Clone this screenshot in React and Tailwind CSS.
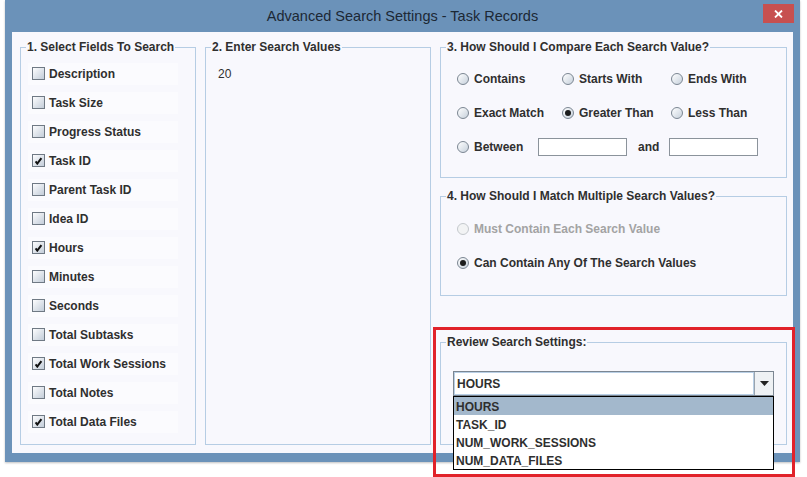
import React from 'react';

/* -------------------------------------------------------------------------- */
/*                                   Data                                     */
/* -------------------------------------------------------------------------- */

const FIELDS = [
  { label: 'Description', checked: false },
  { label: 'Task Size', checked: false },
  { label: 'Progress Status', checked: false },
  { label: 'Task ID', checked: true },
  { label: 'Parent Task ID', checked: false },
  { label: 'Idea ID', checked: false },
  { label: 'Hours', checked: true },
  { label: 'Minutes', checked: false },
  { label: 'Seconds', checked: false },
  { label: 'Total Subtasks', checked: false },
  { label: 'Total Work Sessions', checked: true },
  { label: 'Total Notes', checked: false },
  { label: 'Total Data Files', checked: true },
];

const COMPARE = [
  { label: 'Contains' },
  { label: 'Starts With' },
  { label: 'Ends With' },
  { label: 'Exact Match' },
  { label: 'Greater Than', selected: true },
  { label: 'Less Than' },
];

const REVIEW_ITEMS = ['HOURS', 'TASK_ID', 'NUM_WORK_SESSIONS', 'NUM_DATA_FILES'];

/* -------------------------------------------------------------------------- */
/*                               Swing widgets                                */
/* -------------------------------------------------------------------------- */

const Group = ({ title, className = '', children }) => (
  <fieldset className={`border border-[#b6cde4] min-w-0 ${className}`}>
    <legend className="ml-[5px] px-[1px] text-[12px] leading-[15px] font-bold text-[#2f2f2f]">{title}</legend>
    {children}
  </fieldset>
);

const CheckBox = ({ checked }) => (
  <span className="w-[13px] h-[13px] shrink-0 border border-[#6f7984] bg-linear-to-br from-[#fdfdfe] to-[#c3cdd9] flex items-center justify-center">
    {checked && (
      <svg width="9" height="9" viewBox="0 0 9 9">
        <path d="M1.6 5.4 L3.3 7.6 L7.4 2.2" fill="none" stroke="#111" strokeWidth="2" />
      </svg>
    )}
  </span>
);

const Radio = ({ selected, disabled }) => (
  <span
    className={`w-[12px] h-[12px] shrink-0 rounded-full border flex items-center justify-center ${
      disabled ? 'border-[#c4c8cc] bg-[#f2f3f4]' : 'border-[#7b8692] bg-linear-to-br from-white to-[#c7d1dc]'
    }`}
  >
    {selected && <span className="w-[6px] h-[6px] rounded-full bg-[#1c1c1c]" />}
  </span>
);

const RadioOption = ({ label, selected, disabled }) => (
  <div className="flex items-center gap-[5px]">
    <Radio selected={selected} disabled={disabled} />
    <span className={`text-[12px] font-bold ${disabled ? 'text-[#a3a3a3]' : 'text-[#2f2f2f]'}`}>{label}</span>
  </div>
);

const TextField = () => <div className="w-[89px] h-[18px] border border-[#8b939b] bg-white" />;

/* -------------------------------------------------------------------------- */
/*                                  Panels                                    */
/* -------------------------------------------------------------------------- */

const FieldsPanel = () => (
  <Group title="1. Select Fields To Search" className="w-[176px] h-[405px] shrink-0">
    <div className="pt-[4px]">
      {FIELDS.map((f) => (
        <div key={f.label} className="h-[29px] flex items-center">
          <div className="mx-[7px] w-[150px] h-[22px] bg-[#fbfbfe] flex items-center gap-[4px] pl-[4px]">
            <CheckBox checked={f.checked} />
            <span className="text-[12px] font-bold text-[#2f2f2f] whitespace-nowrap">{f.label}</span>
          </div>
        </div>
      ))}
    </div>
  </Group>
);

const ValuesPanel = () => (
  <Group title="2. Enter Search Values" className="w-[226px] h-[405px] shrink-0 ml-[9px]">
    <div className="pl-[12px] pt-[12px] text-[12px] leading-[15px] text-[#2f2f2f]">20</div>
  </Group>
);

const ComparePanel = () => (
  <Group title="3. How Should I Compare Each Search Value?" className="h-[138px]">
    <div className="pl-[16px] pt-[7px]">
      <div className="grid grid-cols-[105px_109px_1fr] auto-rows-[34px] items-center">
        {COMPARE.map((c) => (
          <RadioOption key={c.label} label={c.label} selected={c.selected} />
        ))}
      </div>
      <div className="h-[34px] flex items-center">
        <div className="w-[81px]">
          <RadioOption label="Between" />
        </div>
        <TextField />
        <span className="ml-[11px] mr-[10px] text-[12px] font-bold text-[#2f2f2f]">and</span>
        <TextField />
      </div>
    </div>
  </Group>
);

const MatchPanel = () => (
  <Group title="4. How Should I Match Multiple Search Values?" className="h-[107px] mt-[11px]">
    <div className="pl-[16px] pt-[8px]">
      <div className="h-[34px] flex items-center">
        <RadioOption label="Must Contain Each Search Value" disabled />
      </div>
      <div className="h-[34px] flex items-center">
        <RadioOption label="Can Contain Any Of The Search Values" selected />
      </div>
    </div>
  </Group>
);

const ReviewPanel = () => (
  <Group title="Review Search Settings:" className="h-[110px] mt-[39px]">
    <div className="pl-[12px] pt-[21px]">
      <div className="relative w-[321px]">
        {/* combo box */}
        <div className="h-[25px] flex border border-[#7b8692] bg-white">
          <div className="flex-1 border border-[#b9cfe5] flex items-center pl-[2px] text-[12px] font-bold text-[#2f2f2f]">
            HOURS
          </div>
          <div className="w-[19px] border-l border-[#9aa4ae] bg-[#eef1f4] flex items-center justify-center">
            <svg width="9" height="5" viewBox="0 0 9 5">
              <path d="M0 0 L9 0 L4.5 5 Z" fill="#222" />
            </svg>
          </div>
        </div>
        {/* open popup list */}
        <div className="absolute left-0 top-[25px] w-[321px] border border-black bg-white z-10">
          {REVIEW_ITEMS.map((item, i) => (
            <div
              key={item}
              className={`h-[18px] flex items-center pl-[2px] pt-[1px] text-[12px] font-bold text-[#2f2f2f] ${
                i === 0 ? 'bg-[#a3b8cc]' : ''
              }`}
            >
              {item}
            </div>
          ))}
        </div>
      </div>
    </div>
  </Group>
);

/* -------------------------------------------------------------------------- */
/*                                   Window                                   */
/* -------------------------------------------------------------------------- */

export default function App() {
  return (
    <div className="relative w-[807px] h-[477px] bg-white overflow-hidden font-['Liberation_Sans',Arial,sans-serif]">
      <div className="ml-[5px] w-[795px] h-[462px] bg-[#6b92b9] flex flex-col shadow-[0_1px_2px_rgba(0,0,0,0.25)]">
        {/* title bar */}
        <div className="h-[32px] grid grid-cols-[1fr_auto_1fr] items-center">
          <div />
          <div className="text-[14.5px] text-[#1c2835] pt-[2px]">Advanced Search Settings - Task Records</div>
          <div className="h-full flex justify-end items-start pt-[4px] pr-[6px]">
            <div className="w-[31px] h-[19px] bg-[#c75050] flex items-center justify-center">
              <svg width="9" height="8" viewBox="0 0 9 8">
                <path d="M1 0.5 L8 7.5 M8 0.5 L1 7.5" stroke="#fff" strokeWidth="1.8" />
              </svg>
            </div>
          </div>
        </div>

        {/* content */}
        <div className="mx-[7px] h-[421px] bg-[#f8f8fd] flex pl-[8px] pt-[8px]">
          <FieldsPanel />
          <ValuesPanel />
          <div className="w-[347px] ml-[9px] flex flex-col">
            <ComparePanel />
            <MatchPanel />
            <ReviewPanel />
          </div>
        </div>
      </div>

      {/* red highlight annotation */}
      <div className="absolute left-[433px] top-[327px] w-[362px] h-[150px] border-[3px] border-[#e1222a] z-20 pointer-events-none" />
    </div>
  );
}
